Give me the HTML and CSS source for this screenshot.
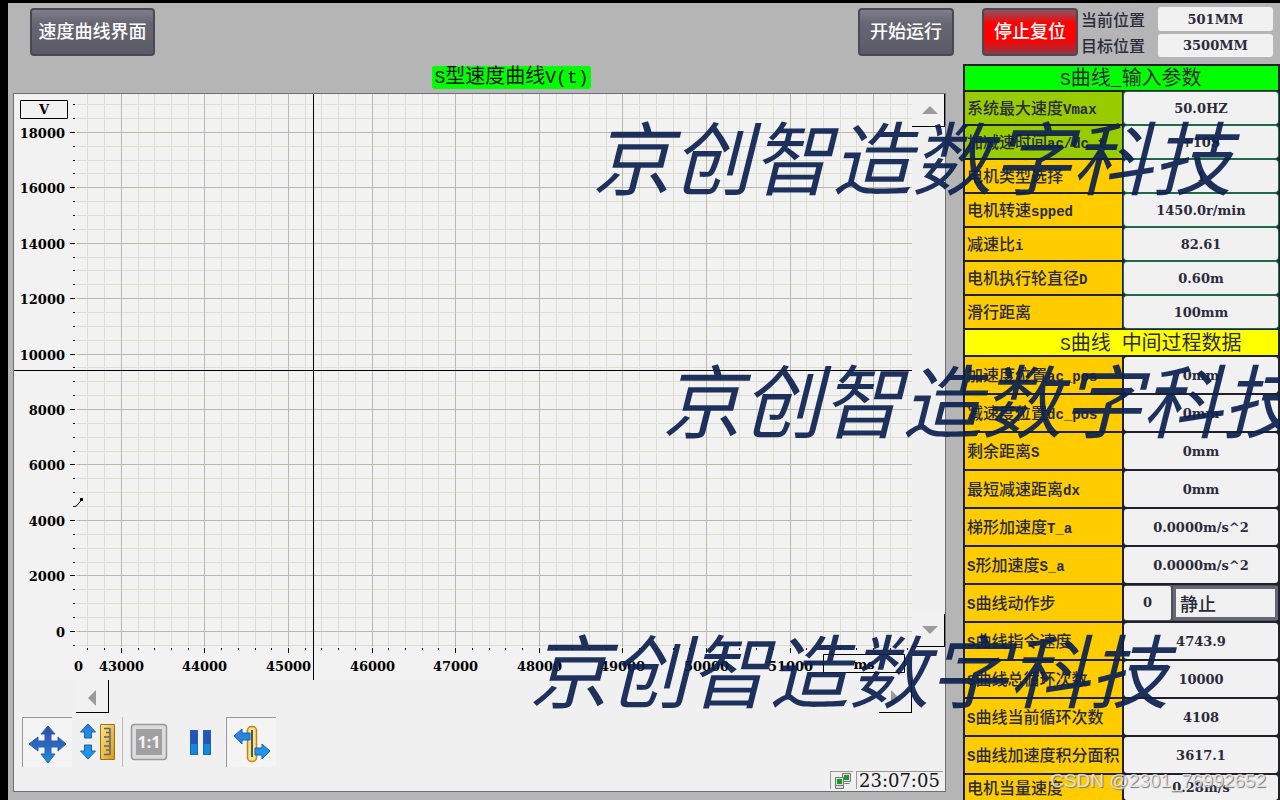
FILE: index.html
```html
<!DOCTYPE html>
<html lang="zh-CN">
<head>
<meta charset="utf-8">
<title>速度曲线界面</title>
<link rel="stylesheet" href="styles.css">
</head>
<body>
<div class="screen">
  <header class="topbar">
    <button class="btn btn-wide" type="button">速度曲线界面</button>
    <div class="run-controls">
      <button class="btn" type="button">开始运行</button>
      <button class="btn btn-stop" type="button">停止复位</button>
    </div>
    <div class="positions">
      <label for="cur">当前位置</label><input id="cur" class="field" value="501MM">
      <label for="dst">目标位置</label><input id="dst" class="field" value="3500MM">
    </div>
  </header>

  <main class="content">
    <section class="curve">
      <div class="curve-head"><h1 class="curve-title"><span class="lt">S</span>型速度曲线<span class="lt">V(t)</span></h1></div>
      <div class="panel">
        <div class="plot-row">
          <svg class="plot" id="plot" viewBox="14 94 898 586" role="img" aria-label="V(t)"></svg>
          <div class="vscroll">
            <button class="scroll" type="button" aria-label="上"><svg width="16" height="8"><path d="M0 8 8 0l8 8z"/></svg></button>
            <button class="scroll" type="button" aria-label="下"><svg width="16" height="8"><path d="M0 0h16L8 8z"/></svg></button>
          </div>
        </div>
        <div class="hscroll">
          <button class="scroll" type="button" aria-label="左"><svg width="8" height="16"><path d="M8 0v16L0 8z"/></svg></button>
          <button class="scroll" type="button" aria-label="右"><svg width="8" height="16"><path d="M0 0v16l8-8z"/></svg></button>
        </div>
        <div class="tools">
          <button class="tool pressed" type="button" aria-label="移动">
            <svg width="50" height="50" viewBox="0 0 50 50"><defs><linearGradient id="b" x1="0" y1="0" x2="0" y2="1"><stop offset="0" stop-color="#2d4fae"/><stop offset=".5" stop-color="#2d66c0"/><stop offset="1" stop-color="#1593e6"/></linearGradient><linearGradient id="u" x1="0" y1="0" x2="0" y2="1"><stop offset="0" stop-color="#2a7fd8"/><stop offset="1" stop-color="#1b9cf0"/></linearGradient><linearGradient id="y" x1="0" y1="0" x2="1" y2="1"><stop offset="0" stop-color="#ffe58a"/><stop offset="1" stop-color="#d99a12"/></linearGradient></defs>
            <path fill="url(#b)" stroke="#2c5da8" d="M26 8l7 8h-4v7h7v-4l8 7-8 7v-4h-7v7h4l-7 9-7-9h4v-7h-7v4l-9-7 9-7v4h7v-7h-4z"/></svg>
          </button>
          <button class="tool ruled" type="button" aria-label="缩放">
            <svg width="50" height="50" viewBox="0 0 50 50"><path fill="url(#u)" stroke="#1c62b4" d="M16 7l7.500 8H19.500v6h-7v-6H8.500zM12.500 28h7v6h4L16 42l-7.500-8h4z"/><path fill="url(#y)" stroke="#9a7018" d="M28.500 7.500h14v35h-14z"/><path fill="none" stroke="#5d6672" stroke-width="1.500" d="M38 11v27M32 11.500h6M34 15.500h4M32 20h6M34 24.500h4M32 29h6M34 33h4M32 37.500h6"/></svg>
          </button>
          <button class="tool" type="button" aria-label="1:1">
            <svg width="50" height="50" viewBox="0 0 50 50"><rect x="8.500" y="7.500" width="35" height="35" rx="3" fill="#dcdcdc" stroke="#999" stroke-width="1.500"/><path fill="#a0a0a0" d="M13 12h26v26H13z"/><text class="ratio" x="26" y="31" text-anchor="middle">1:1</text></svg>
          </button>
          <button class="tool" type="button" aria-label="暂停">
            <svg width="50" height="50" viewBox="0 0 50 50"><path fill="#2754b5" d="M16 13h8v25h-8zM29 13h8v25h-8z"/><path fill="#1189dc" d="M16 27h8v11h-8zM29 27h8v11h-8z"/><path fill="none" stroke="#1c62b4" d="M16.500 13.500h7v24h-7zM29.500 13.500h7v24h-7z"/></svg>
          </button>
          <button class="tool pressed" type="button" aria-label="标尺">
            <svg width="50" height="50" viewBox="0 0 50 50"><rect x="21.500" y="8.500" width="9" height="35" rx="4" fill="#fbe18a" stroke="#b98518" stroke-width="1.500"/><path stroke="#4d5561" stroke-width="2" d="M26 12v27"/><path fill="url(#u)" stroke="#1c62b4" d="M8 18l8-7v4h8v7h-8v4zM44 33l-8-7v4h-7v7h7v4z"/></svg>
          </button>
        </div>
        <div class="status">
          <span class="link-state"><svg width="18" height="18" viewBox="0 0 18 18"><path fill="#ddd" stroke="#777" d="M8.500 1.500h8v8h-8zM10.500 11.500h5"/><path fill="#1b9a2a" d="M10 3h5v5h-5z"/><path fill="#ddd" stroke="#777" d="M1.500 5.500h8v8h-8zM1.500 13.500h8v3h-8z"/><path fill="#1b9a2a" d="M3 7h5v5H3z"/></svg></span>
          <time class="clock">23:07:05</time>
        </div>
      </div>
    </section>

    <table class="params">
      <colgroup><col class="c-name"><col></colgroup>
      <tbody class="inputs">
        <tr class="head green"><th colspan="2"><span class="lt">S</span>曲线<span class="lt">_</span>输入参数</th></tr>
        <tr class="lime"><th><label for="p1">系统最大速度<span class="lt">Vmax</span></label></th><td><input id="p1" value="50.0HZ"></td></tr>
        <tr class="lime"><th><label for="p2">加减速时间<span class="lt">ac/dc t</span></label></th><td><input id="p2" value="+10S"></td></tr>
        <tr><th><label for="p3">电机类型选择</label></th><td><input id="p3" value="1"></td></tr>
        <tr><th><label for="p4">电机转速<span class="lt">spped</span></label></th><td><input id="p4" value="1450.0r/min"></td></tr>
        <tr><th><label for="p5">减速比<span class="lt">i</span></label></th><td><input id="p5" value="82.61"></td></tr>
        <tr><th><label for="p6">电机执行轮直径<span class="lt">D</span></label></th><td><input id="p6" value="0.60m"></td></tr>
        <tr><th><label for="p7">滑行距离</label></th><td><input id="p7" value="100mm"></td></tr>
      </tbody>
      <tbody class="process">
        <tr class="head yellow"><th colspan="2"><span class="lt">S</span>曲线<span class="lt">&nbsp;</span>中间过程数据</th></tr>
        <tr><th>加速度位置<span class="lt">ac_pos</span></th><td>0mm</td></tr>
        <tr><th>减速度位置<span class="lt">dc_pos</span></th><td>0mm</td></tr>
        <tr><th>剩余距离<span class="lt">S</span></th><td>0mm</td></tr>
        <tr><th>最短减速距离<span class="lt">dx</span></th><td>0mm</td></tr>
        <tr><th>梯形加速度<span class="lt">T_a</span></th><td>0.0000m/s^2</td></tr>
        <tr><th><span class="lt">S</span>形加速度<span class="lt">S_a</span></th><td>0.0000m/s^2</td></tr>
        <tr><th><span class="lt">S</span>曲线动作步</th><td class="step"><div class="step-row"><span class="step-no">0</span><input class="step-name" aria-label="动作步" value="静止" readonly></div></td></tr>
        <tr><th><span class="lt">S</span>曲线指令速度</th><td>4743.9</td></tr>
        <tr><th><span class="lt">S</span>曲线总循环次数</th><td>10000</td></tr>
        <tr><th><span class="lt">S</span>曲线当前循环次数</th><td>4108</td></tr>
        <tr><th><span class="lt">S</span>曲线加速度积分面积</th><td>3617.1</td></tr>
        <tr class="last"><th>电机当量速度</th><td>0.28m/s</td></tr>
      </tbody>
    </table>
  </main>

  <div class="mark mark-a">京创智造数字科技</div>
  <div class="mark mark-b">京创智造数字科技</div>
  <div class="mark mark-c">京创智造数字科技</div>
  <div class="credit">CSDN @2301_76992652</div>
</div>
<script src="chart.js"></script>
</body>
</html>
```
FILE: styles.css
```css
* { box-sizing: border-box; }
body {
  margin: 0;
  background: #000;
  color: #2b2b3b;
  font-family: "Liberation Mono", "Noto Sans CJK SC", monospace;
  font-size: 16px;
}
button, input { font: inherit; color: inherit; margin: 0; padding: 0; border: 0; }
.screen {
  position: relative;
  height: 100vh;
  padding: 3px 0 0 8px;
  overflow: hidden;
}
.topbar {
  display: flex;
  align-items: flex-start;
  height: 61px;
  padding: 4px 7px 0 22px;
  background: #b5b5b5;
}
.btn {
  width: 96px;
  height: 48px;
  margin-top: 1px;
  padding-bottom: 4px;
  border: 2px solid #4a4a56;
  border-radius: 4px;
  background: linear-gradient(#7f7f8b, #666672 30%, #62626e 65%, #5a5a68);
  color: #fff;
  font-size: 18px;
  font-weight: 500;
}
.btn-wide { width: 125px; }
.btn-stop { background: linear-gradient(#8a5560, #f00 32%, #f00 68%, #8a3a46); }
.run-controls { display: flex; gap: 28px; margin-left: auto; }
.positions {
  display: grid;
  grid-template-columns: 77px 115px;
  grid-template-rows: 24px 23px;
  row-gap: 3px;
  align-items: center;
  padding-left: 3px;
}
.positions label { padding-top: 5px; font-weight: 500; line-height: 20px; }
.field {
  width: 100%;
  height: 100%;
  border-radius: 3px;
  background: #f1f1f2;
  text-align: center;
  font: bold 13px "DejaVu Serif", serif;
}
.content {
  display: grid;
  grid-template-columns: minmax(0, 1fr) 317px;
  column-gap: 17px;
  height: 100%;
  padding-left: 5px;
  background: #b5b5b5;
}
.curve-head {
  display: flex;
  justify-content: center;
  padding: 2px 0 4px 64px;
}
.curve-title {
  margin: 0;
  padding: 1px 2px 0;
  border-radius: 3px;
  background: #0f0;
  color: #101010;
  font-size: 20px;
  font-weight: 400;
  line-height: 22px;
  height: 23px;
}
.params .lt { font-size: 14px; font-weight: 700; }
.curve-title .lt, .params .head .lt { font-size: 18px; font-weight: 400; }
.panel {
  border: 1px solid #6b6f78;
  background: #f0f0f0;
}
.plot-row { display: flex; }
.plot { flex: 1; min-width: 0; display: block; background: #f2f2f2; }
.plot text, .params td, .params td input {
  font: bold 13px "DejaVu Serif", "Noto Sans CJK SC", serif;
}
.minor { stroke: #dedecd; }
.major { stroke: #b9b9ad; }
.ink { stroke: #000; fill: none; }
.vscroll {
  display: flex;
  flex-direction: column;
  justify-content: space-between;
  width: 33px;
  margin-bottom: 33px;
}
.scroll {
  display: flex;
  align-items: center;
  justify-content: center;
  width: 33px;
  height: 33px;
  border-right: 1px solid #000;
  border-bottom: 1px solid #000;
  background: #f1f1f1;
}
.vscroll .scroll { padding-left: 3px; }
.hscroll .scroll { padding-top: 4px; }
.scroll path { fill: #9b9b9b; }
.hscroll {
  display: flex;
  justify-content: space-between;
  padding: 0 33px 0 62px;
}
.tools { display: flex; gap: 1px; padding: 4px 8px 0; }
.tool { width: 50px; height: 50px; background: none; }
.tool svg { display: block; margin: -1px; }
.pressed { border-top: 1px solid #999; border-left: 1px solid #999; background: #f4f4f4; }
.ruled { border-right: 1px solid #bbb; }
.ratio { fill: #f4f4f4; font: bold 16px "Open Sans", sans-serif; }
.status { display: flex; justify-content: flex-end; gap: 3px; padding: 4px 2px 2px 0; }
.link-state, .clock { height: 18px; border-top: 1px solid #999; border-left: 1px solid #999; }
.link-state { width: 23px; padding-left: 3px; }
.clock {
  width: 87px;
  padding-left: 2px;
  color: #151520;
  font: 18px/18px "DejaVu Serif", serif;
}
.params {
  align-self: start;
  width: 100%;
  table-layout: fixed;
  border-spacing: 2px;
  background: #20202a;
}
.c-name { width: 157px; }
.params th, .params td { height: 36px; padding: 0; }
.inputs th, .inputs td { height: 32px; }
.params th {
  padding: 4px 0 0 2px;
  background: #fc0;
  text-align: left;
  font-weight: 500;
  line-height: 20px;
  white-space: nowrap;
}
.params .lime th { background: #9c0; }
.params td {
  border-radius: 3px;
  background: #f1f1f2;
  text-align: center;
}
.inputs td { box-shadow: 0 0 0 1px #1d6b4a; }
.params td input { display: block; width: 100%; background: none; text-align: center; }
.params .head th {
  height: 24px;
  padding: 3px 0 0 95px;
  font-size: 20px;
  font-weight: 400;
  line-height: 20px;
}
.params .green th { background: #0f0; }
.params .yellow th { height: 25px; padding-top: 5px; background: #ff0; }
.params .step { background: #4f505e; }
.step-row { display: flex; gap: 2px; height: 34px; }
.step-no { width: 47px; border-radius: 2px; background: #f1f1f2; line-height: 34px; }
.params .step .step-name {
  flex: 1;
  min-width: 0;
  padding-left: 4px;
  border: 3px solid #666876;
  background: #f1f1f2;
  text-align: left;
  font-size: 18px;
  font-weight: 500;
}
.params .last th, .params .last td { height: 25px; }
.mark {
  position: absolute;
  color: #0c2150;
  font: italic 400 80px/88px "Noto Sans CJK SC", sans-serif;
  opacity: 0.92;
  white-space: nowrap;
  pointer-events: none;
}
.mark-a { left: 592px; top: 110px; }
.mark-b { left: 662px; top: 353px; }
.mark-c { left: 529px; top: 623px; }
.credit {
  position: absolute;
  right: 14px;
  bottom: 8px;
  color: rgba(235, 235, 235, 0.85);
  font: 19px/22px "Liberation Sans", sans-serif;
  text-shadow: 1px 1px 1px #777;
  pointer-events: none;
}
```
FILE: chart.js
```js
// Draws the grid, axes and cursor lines of the speed chart.
(function () {
  const plot = document.getElementById('plot');
  const out = [];
  const line = (cls, x1, y1, x2, y2) =>
    out.push(`<path class="${cls}" d="M${x1} ${y1}L${x2} ${y2}"/>`);
  const label = (x, y, anchor, s) =>
    out.push(`<text x="${x}" y="${y}" text-anchor="${anchor}">${s}</text>`);
  const px = v => Math.floor(v) + 0.5;

  const xs = [], ys = [];
  for (let i = -2; i <= 47; i++) xs.push([px(121.3 + i * 16.72), i % 5 === 0, 43000 + i * 200]);
  for (let i = -1; i <= 38; i++) ys.push([px(631.3 - i * 13.86), i % 4 === 0, i * 500]);

  for (const major of [false, true]) {
    const cls = major ? 'major' : 'minor';
    xs.filter(t => t[1] === major).forEach(t => line(cls, t[0], 94, t[0], 647));
    ys.filter(t => t[1] === major).forEach(t => line(cls, 77, t[0], 912, t[0]));
  }
  xs.forEach(([x, major, v]) => {
    line('ink', x, 648, x, major ? 653 : 650);
    if (major && v <= 51000) label(x, 671, 'middle', v);
  });
  ys.forEach(([y, major, v]) => {
    line('ink', major ? 70 : 73, y, 75, y);
    if (major) label(65, y + 5, 'end', v);
  });
  label(74, 671, 'start', '0');
  out.push('<path class="ink" d="M20.500 100.500h47v18h-47zM823.500 654.500h81v18h-81z"/>');
  label(44, 114, 'middle', 'V');
  label(864, 669, 'middle', 'ms');
  line('ink', 313.5, 94, 313.5, 680);
  line('ink', 14, 370.5, 912, 370.5);
  out.push('<path class="ink" d="M75 506.500l2-1 4-5"/><path d="M80 498h3v3h-3z"/>');
  plot.innerHTML = out.join('');
})();
```
